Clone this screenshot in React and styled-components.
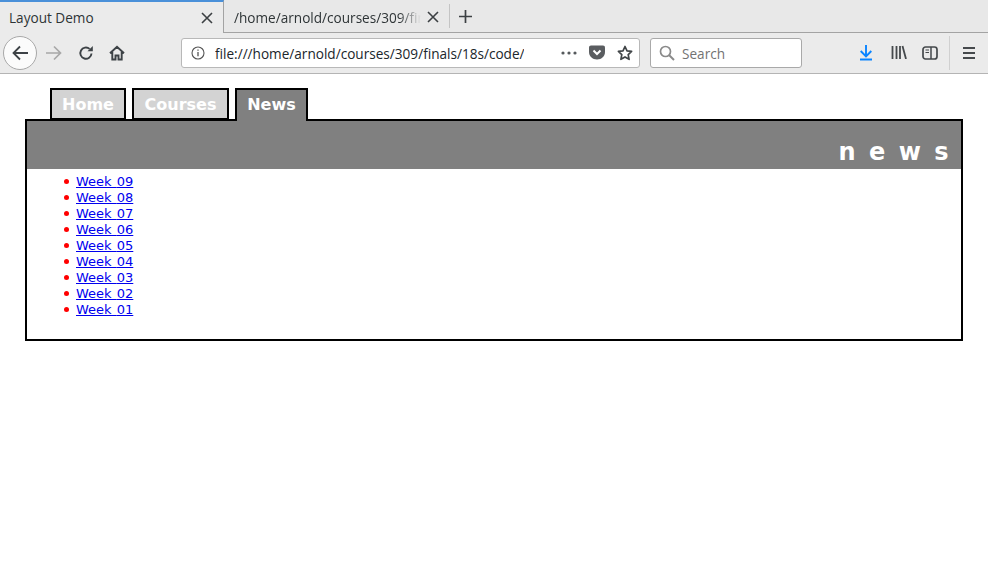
import React from "react";
import styled, { createGlobalStyle } from "styled-components";

const Global = createGlobalStyle`
  html, body { margin: 0; padding: 0; background: #fff; }
  body { font-family: "DejaVu Sans", sans-serif; }
`;
const Browser = styled.div`
  width: 988px; height: 561px; overflow: hidden; display: flex; flex-direction: column; background: #fff;
`;
const Chrome = styled.header`
  height: 74px; flex: none; display: flex; flex-direction: column; background: #ebebeb;
  border-bottom: 1px solid #b4b4b4; box-sizing: border-box;
  font-family: "Open Sans", "Noto Sans", sans-serif;
`;
const TabStrip = styled.div`
  height: 33px; flex: none; display: flex; background: #e8e8e8; border-bottom: 1px solid #a3a3a3; box-sizing: border-box; align-items: stretch;
`;
const ActiveTab = styled.div`
  width: 224px; height: 33px; box-sizing: border-box; flex: none; background: #ebebeb;
  border-top: 2px solid #4a90d9; border-right: 1px solid #a3a3a3;
  display: flex; align-items: center; justify-content: space-between; padding: 0 10px 0 9px;
  font-size: 13.6px; color: #2e3436;
`;
const IdleTab = styled.div`
  width: 225px; box-sizing: border-box; flex: none; display: flex; align-items: center; padding: 2px 10px 0 10px;
  font-size: 13.6px; color: #2e3436; justify-content: space-between;
`;
const TabLabel = styled.span`
  width: 187px; white-space: nowrap; overflow: hidden;
  -webkit-mask-image: linear-gradient(to right, #000 165px, transparent 187px);
  mask-image: linear-gradient(to right, #000 165px, transparent 187px);
`;
const Divider = styled.div`
  width: 1px; height: 24px; background: #c4c4c4; margin: 4px 0 0 0; flex: none;
`;
const PlusBox = styled.div`
  width: 31px; display: flex; align-items: center; justify-content: center; padding-top: 1px;
`;
const Toolbar = styled.div`
  flex: 1; display: flex; align-items: center; position: relative;
`;
const BackButton = styled.div`
  width: 32px; height: 32px; margin-left: 3px; flex: none; border-radius: 50%; background: #fbfbfb; border: 1px solid #a8a8a8;
  display: flex; align-items: center; justify-content: center;
`;
const NavIcon = styled.div`
  width: 16px; height: 16px; flex: none; margin-left: ${(p) => p.$ml}px; display: flex;
`;
const UrlBar = styled.div`
  width: 459px; height: 30px; margin-left: 56px; flex: none; box-sizing: border-box; background: #fff; border: 1px solid #b8b8b8; border-radius: 3px;
  display: flex; align-items: center; padding: 0 5px 0 9px; font-size: 13.6px; color: #20262b;
`;
const UrlText = styled.span`
  margin-left: 10px; width: 309px; overflow: hidden; white-space: nowrap; flex: none;
`;
const UrlActions = styled.div`
  display: flex; align-items: center; margin-left: 37px; gap: 12px;
`;
const SearchBox = styled.div`
  width: 152px; height: 30px; margin-left: 10px; flex: none; box-sizing: border-box; background: #fff; border: 1px solid #a9a9a9; border-radius: 3px;
  display: flex; align-items: center; padding-left: 8px; gap: 7px; font-size: 13.6px; color: #737373;
`;
const Separator = styled.div`
  width: 1px; height: 34px; background: #d0d0d0; flex: none; margin-left: 11px;
`;
const Page = styled.main`
  flex: 1; padding: 14px 25px 0;
`;
const Tabs = styled.nav`
  display: flex; padding-left: 25px; height: 32px; gap: 6px; position: relative; z-index: 1;
`;
const PageTab = styled.a`
  height: ${(p) => (p.$active ? 33 : 32)}px; box-sizing: border-box; border: 2px solid #000; border-bottom: ${(p) => (p.$active ? "none" : "2px solid #000")};
  width: ${(p) => p.$w}px; flex: none;
  background: ${(p) => (p.$active ? "#808080" : "#d3d3d3")}; color: #fff;
  font: bold 16px/30px "DejaVu Sans", sans-serif; text-align: center;
`;
const Panel = styled.section`
  width: 938px; height: 222px; margin-top: -1px; box-sizing: border-box; border: 2px solid #000;
`;
const Banner = styled.div`
  height: 48px; background: #808080; color: #fff; box-sizing: border-box; padding: 17px 12px 0 0; text-align: right;
  font: bold 24px/28px "DejaVu Sans", sans-serif; letter-spacing: 13.4px; white-space: nowrap;
  & > span { margin-right: -13px; }
`;
const List = styled.ul`
  margin: 5px 0 0; padding: 0 0 0 49px; list-style: none;
  font: 13px/16px "DejaVu Sans", sans-serif; word-spacing: 1px;
`;
const Item = styled.li`
  height: 16px; position: relative;
  &::before {
    content: ""; position: absolute; left: -12px; top: 5px; width: 5px; height: 5px; border-radius: 50%; background: #f00;
  }
`;
const WeekLink = styled.a`
  color: #00e; text-decoration: underline;
`;

const S = ({ w = 16, h = 16, children, vb }) => (
  <svg width={w} height={h} viewBox={vb || `0 0 ${w} ${h}`} fill="none" style={{ display: "block", flex: "none" }}>{children}</svg>
);
const Close = () => (
  <S w={12} h={12}><path d="M1 1l10 10M11 1L1 11" stroke="#3c4043" strokeWidth="1.6" /></S>
);
const weeks = ["09", "08", "07", "06", "05", "04", "03", "02", "01"];

export default function App() {
  return (
    <Browser>
      <Global />
      <Chrome>
        <TabStrip>
          <ActiveTab>Layout Demo<Close /></ActiveTab>
          <IdleTab><TabLabel>/home/arnold/courses/309/finals/18s/code/</TabLabel><Close /></IdleTab>
          <Divider />
          <PlusBox><S w={15} h={15}><path d="M7.5 1v13M1 7.5h13" stroke="#3c4043" strokeWidth="1.7" /></S></PlusBox>
        </TabStrip>
        <Toolbar>
          <BackButton>
            <S w={18} h={18}><path d="M17 9H2.500M9 2.500L2.500 9 9 15.500" stroke="#3d4246" strokeWidth="1.800" /></S>
          </BackButton>
          <NavIcon $ml={7}>
            <S w={19} h={16}><path d="M2 8h15M10 1.500L16.500 8 10 14.500" stroke="#a8a8a8" strokeWidth="1.700" /></S>
          </NavIcon>
          <NavIcon $ml={18}>
            <S><path d="M13.500 8.500A5.600 5.600 0 1 1 11.600 3.900" stroke="#3d4246" strokeWidth="1.900" /><path d="M9.500 6.300h5.300V1z" fill="#3d4246" /></S>
          </NavIcon>
          <NavIcon $ml={15}>
            <S><path d="M1 8.300L8 1.700l7 6.600M3.300 7v7.500h3.200v-4h3v4h3.200V7" stroke="#3d4246" strokeWidth="1.900" /></S>
          </NavIcon>
          <UrlBar>
            <S w={14} h={14}><circle cx="7" cy="7" r="6" stroke="#555" strokeWidth="1.100" /><path d="M7 6v4.200M7 3.500v1.300" stroke="#555" strokeWidth="1.300" /></S>
            <UrlText>file:///home/arnold/courses/309/finals/18s/code/</UrlText>
            <UrlActions>
              <S w={16} h={4}><circle cx="2" cy="2" r="1.600" fill="#55595c" /><circle cx="8" cy="2" r="1.600" fill="#55595c" /><circle cx="14" cy="2" r="1.600" fill="#55595c" /></S>
              <S><path d="M0 2.500C0 1.200.8.500 2 .500h12c1.200 0 2 .700 2 2V7c0 4.300-3.400 7.500-8 7.500S0 11.300 0 7z" fill="#5a5d60" /><path d="M4.500 5.500L8 9l3.500-3.500" stroke="#fff" strokeWidth="2" /></S>
              <S w={16} h={16}><path d="M8 1.500l2 4.300 4.600.600-3.400 3.200.900 4.700L8 11.900l-4.100 2.400.900-4.700L1.400 6.400 6 5.800z" stroke="#404447" strokeWidth="1.700" strokeLinejoin="round" /></S>
            </UrlActions>
          </UrlBar>
          <SearchBox>
            <S><circle cx="6.500" cy="6.500" r="5" stroke="#8a8a8a" strokeWidth="1.700" /><path d="M10 10l5 5" stroke="#8a8a8a" strokeWidth="1.900" /></S>
            Search
          </SearchBox>
          <NavIcon $ml={57}>
            <S w={14} h={16}><path d="M7 0v11M1.700 6l5.300 5.300L12.300 6" stroke="#0a84ff" strokeWidth="1.900" /><path d="M1 14.500h12" stroke="#0a84ff" strokeWidth="2" /></S>
          </NavIcon>
          <NavIcon $ml={16}>
            <S w={16} h={14}><path d="M1.500 1v13M5.500 1v13M9 1v13M11.500 1l3.500 13" stroke="#45494c" strokeWidth="1.800" /></S>
          </NavIcon>
          <NavIcon $ml={15}>
            <S><rect x="1" y="2" width="14" height="12" rx="2.500" stroke="#45494c" strokeWidth="1.700" /><path d="M9 2v12" stroke="#45494c" strokeWidth="1.500" /><path d="M3.500 5h3.500M3.500 7.500h3.500" stroke="#45494c" strokeWidth="1.200" /></S>
          </NavIcon>
          <Separator />
          <NavIcon $ml={12}>
            <S w={14} h={16}><path d="M1 3h12M1 8h12M1 13h12" stroke="#45494c" strokeWidth="1.800" /></S>
          </NavIcon>
        </Toolbar>
      </Chrome>
      <Page>
        <Tabs>
          <PageTab $w={76}>Home</PageTab>
          <PageTab $w={97}>Courses</PageTab>
          <PageTab $w={73} $active>News</PageTab>
        </Tabs>
        <Panel>
          <Banner><span>news</span></Banner>
          <List>
            {weeks.map((w) => (
              <Item key={w}><WeekLink href="#">Week {w}</WeekLink></Item>
            ))}
          </List>
        </Panel>
      </Page>
    </Browser>
  );
}
